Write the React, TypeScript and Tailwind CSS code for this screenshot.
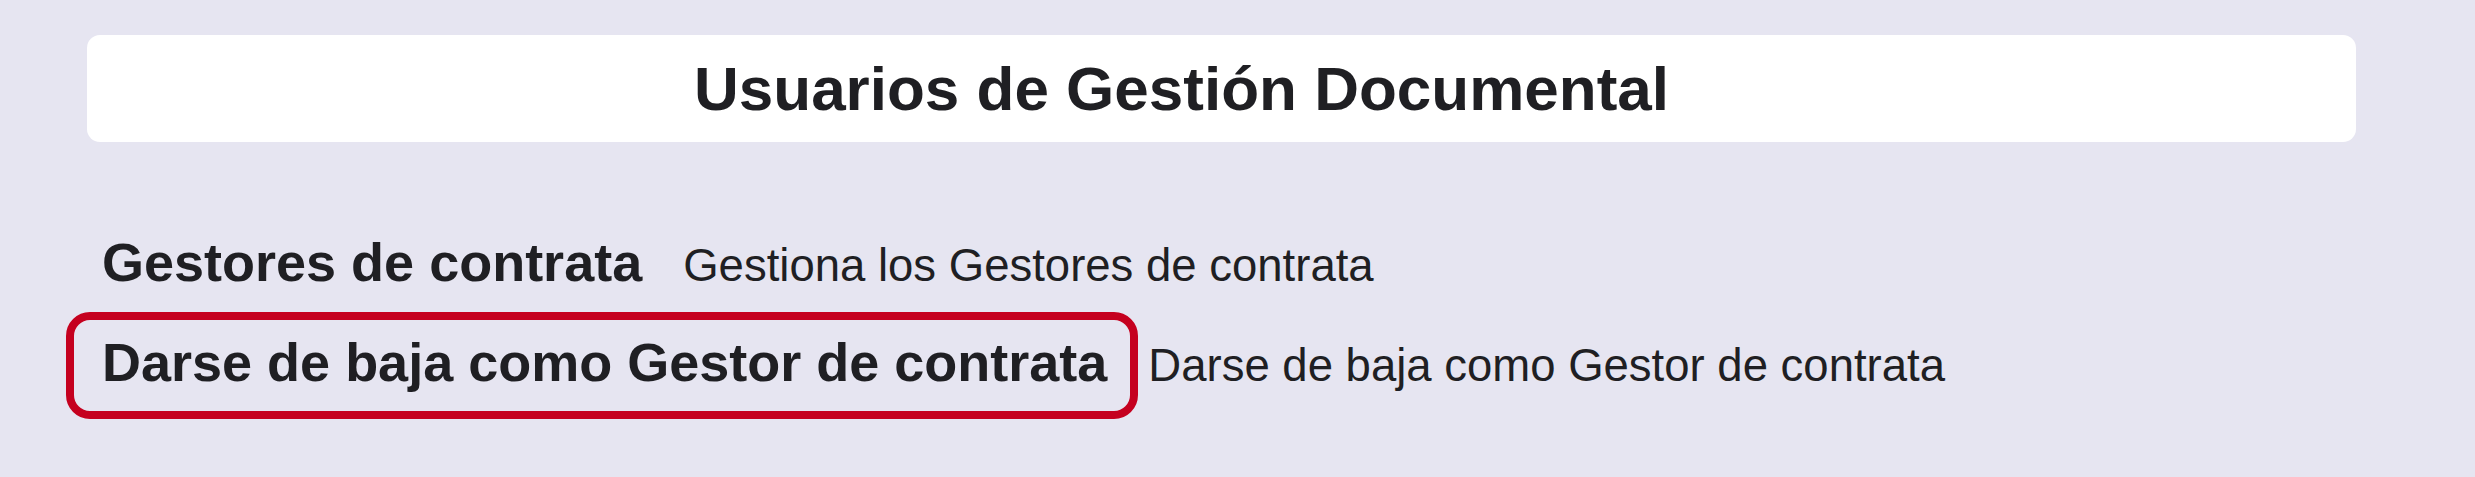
export default function App() {
  const font = { fontFamily: '"Liberation Sans", Arial, sans-serif' };
  return (
    <div className="w-full h-[477px] bg-[#e6e5f1] pt-[35px] overflow-hidden text-[#1f1f23]" style={font}>
      <div className="ml-[87px] w-[2269px] h-[107px] bg-white rounded-[13px] flex items-center justify-center pr-[80px]">
        <h1 className="text-[62px] leading-none font-bold">Usuarios de Gestión Documental</h1>
      </div>
      <div className="ml-[66px] mt-[70px] flex flex-col">
        <div className="flex items-baseline">
          <div className="h-[107px] border-[8px] border-transparent rounded-[24px] pl-[28px] pr-[23px] pb-[7px] flex items-center">
            <span className="text-[54px] leading-none font-bold">Gestores de contrata</span>
          </div>
          <span className="ml-[10px] text-[45.5px] leading-none">Gestiona los Gestores de contrata</span>
        </div>
        <div className="flex items-baseline -mt-[7px]">
          <div className="h-[107px] border-[8px] border-[#c5001f] rounded-[24px] pl-[28px] pr-[23px] pb-[7px] flex items-center">
            <span className="text-[54px] leading-none font-bold">Darse de baja como Gestor de contrata</span>
          </div>
          <span className="ml-[10px] text-[45.5px] leading-none">Darse de baja como Gestor de contrata</span>
        </div>
      </div>
    </div>
  );
}
